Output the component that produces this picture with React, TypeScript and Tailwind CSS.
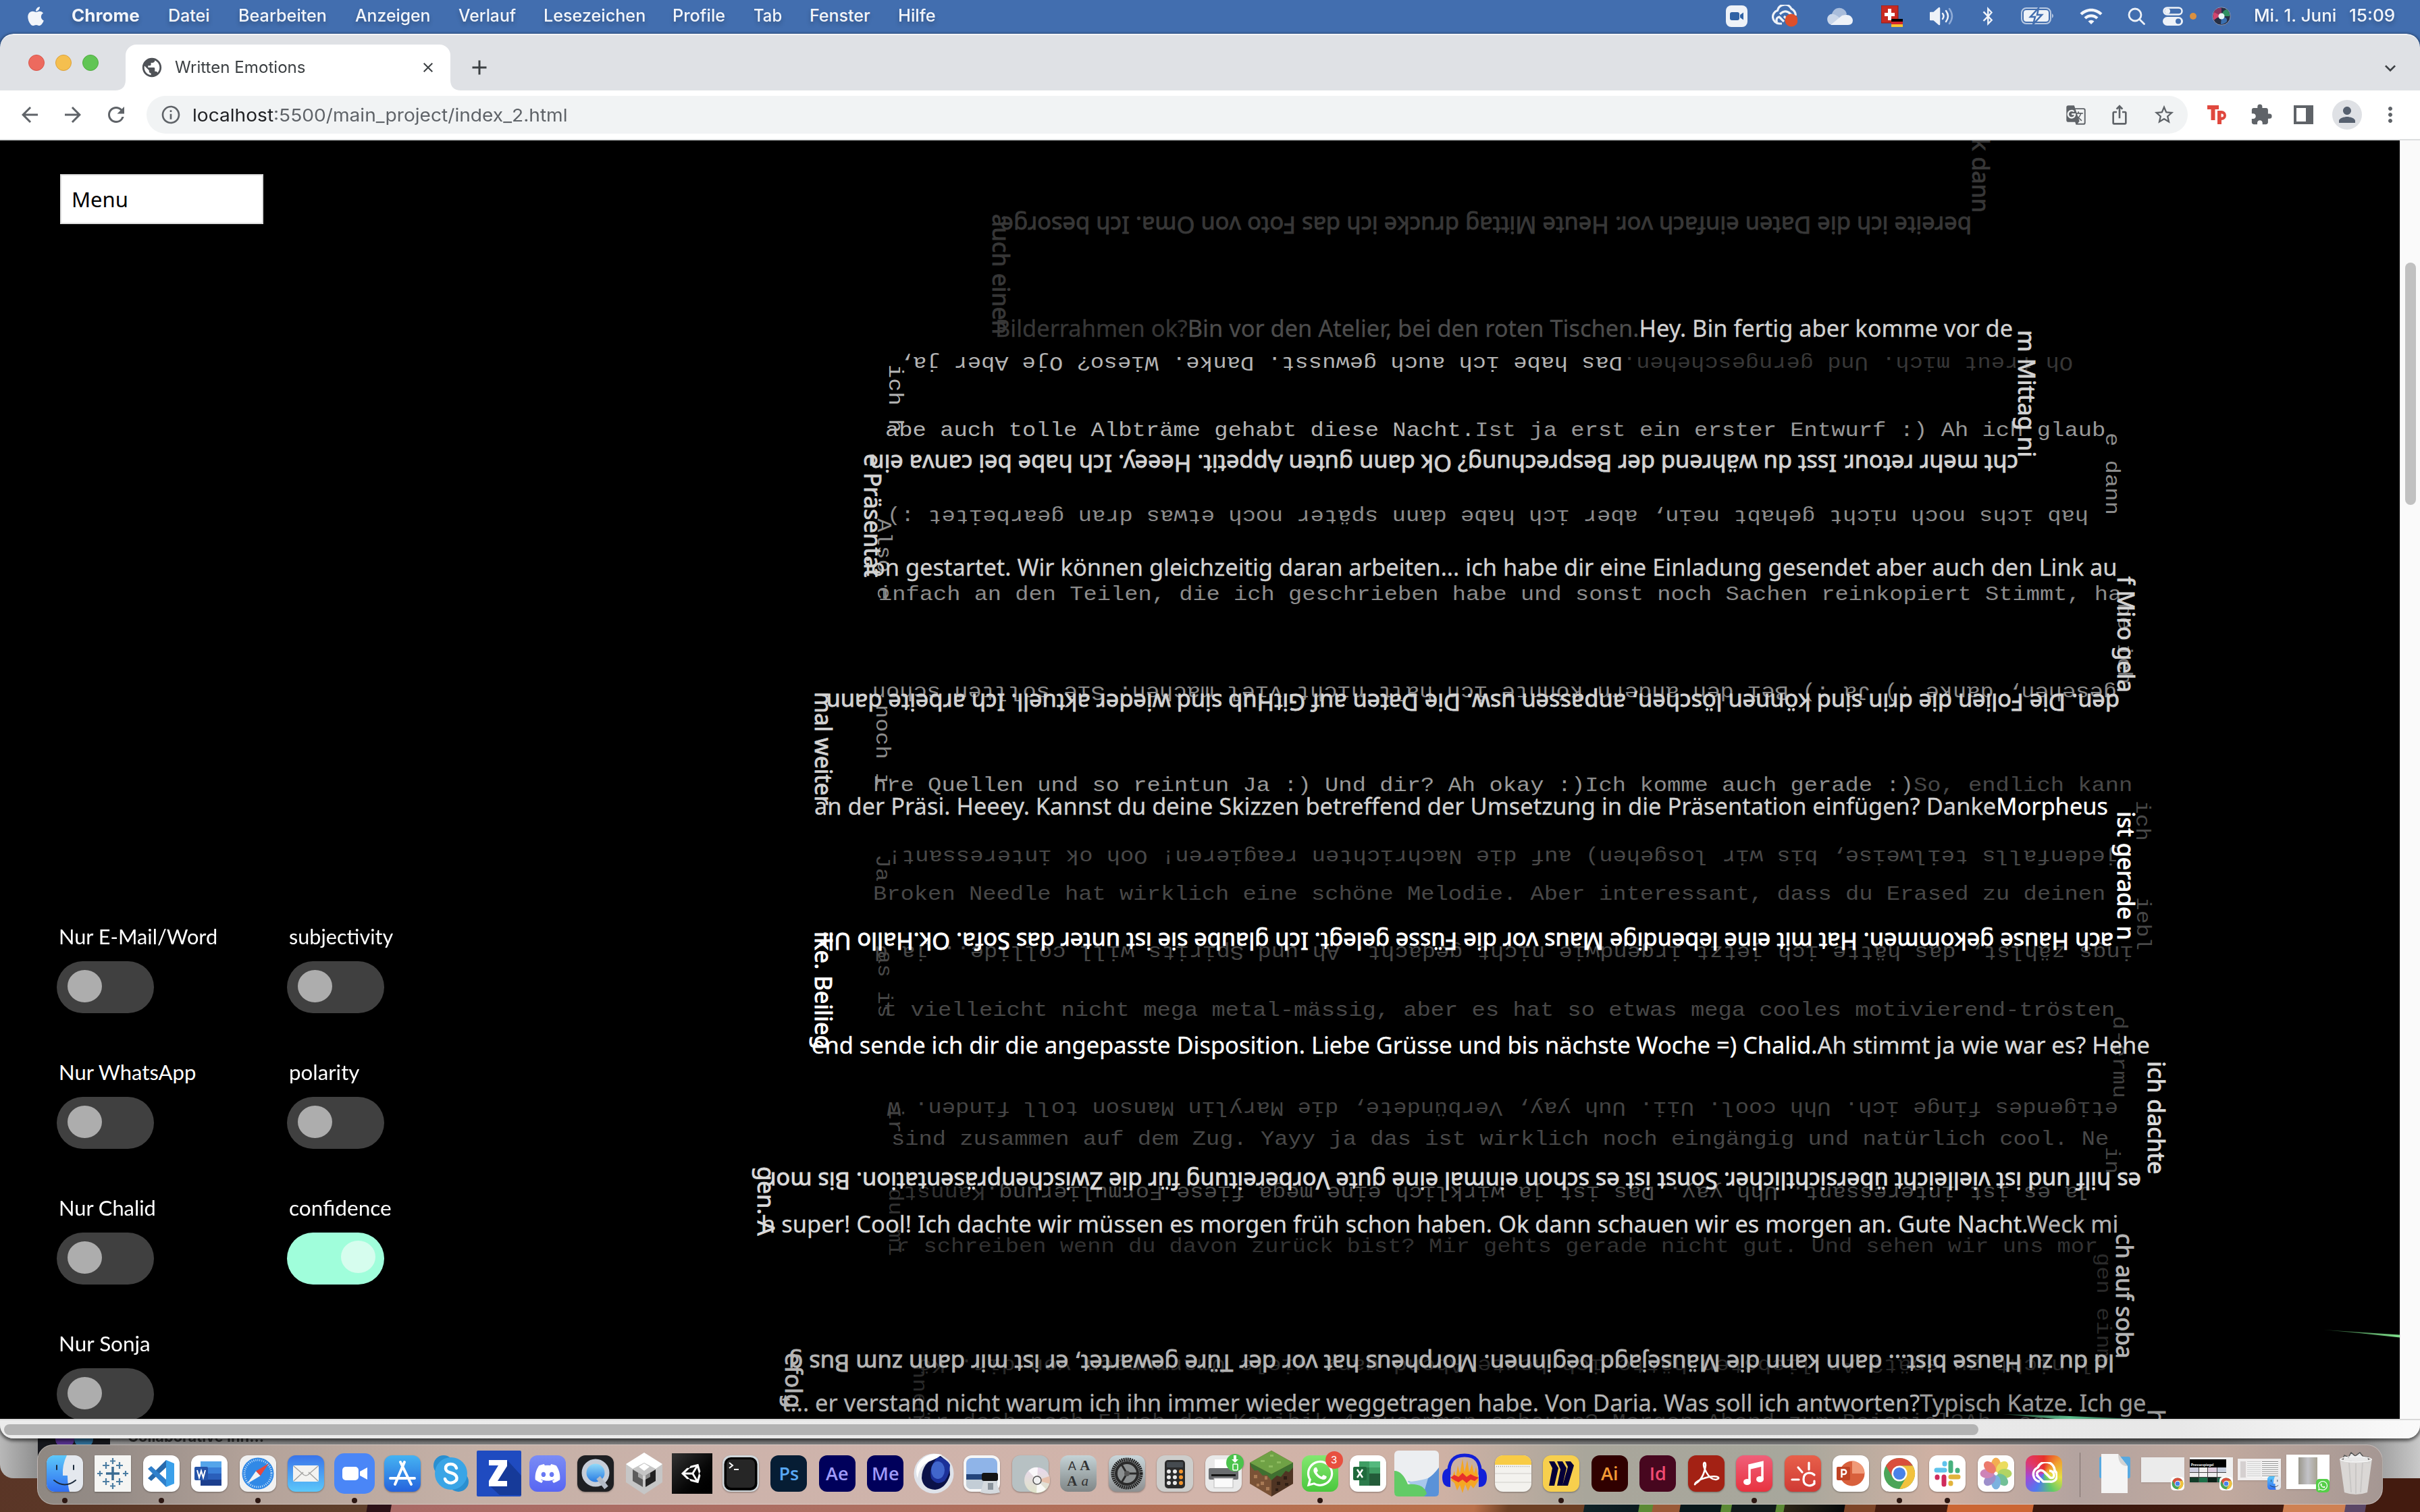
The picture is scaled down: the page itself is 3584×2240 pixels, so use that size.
import React, { useLayoutEffect, useRef, useState } from "react";
import { FaApple, FaBluetoothB, FaDiscord, FaUnity, FaWhatsapp } from "react-icons/fa";
import {
  MdAdd,
  MdArrowBack,
  MdArrowForward,
  MdClose,
  MdExpandMore,
  MdExtension,
  MdGTranslate,
  MdInfoOutline,
  MdIosShare,
  MdMoreVert,
  MdPerson,
  MdPublic,
  MdRefresh,
  MdSearch,
  MdStarBorder,
  MdVolumeUp,
  MdWifi,
} from "react-icons/md";

/* ---------- text helpers ---------- */

function useFit(w: number) {
  const ref = useRef<HTMLSpanElement>(null);
  const [s, setS] = useState(1);
  useLayoutEffect(() => {
    if (ref.current) setS(w / ref.current.offsetWidth);
  }, [w]);
  return { ref, s };
}

/* Label that always takes exactly w pixels. */
function Fit({ w, className = "", children }: { w: number; className?: string; children: React.ReactNode }) {
  const { ref, s } = useFit(w);
  return (
    <span className={"block shrink-0 whitespace-pre " + className} style={{ width: w }}>
      <span ref={ref} className="inline-block origin-left" style={{ transform: `scaleX(${s})` }}>
        {children}
      </span>
    </span>
  );
}

type Run = [string, string];
type Strand = { f: "s" | "m"; r: 0 | 90 | 180; x: number; y: number; to: number; t: Run[] };

const S = (r: 0 | 90 | 180, x: number, y: number, to: number, ...t: Run[]): Strand => ({ f: "s", r, x, y, to, t });
const M = (r: 0 | 90 | 180, x: number, y: number, to: number, ...t: Run[]): Strand => ({ f: "m", r, x, y, to, t });

const strands: Strand[] = [
  M(180, 3070, 529, 1332, ["Oh freut mich. Und gerngeschehen.", "#373737"], ["Das habe ich auch gewusst. Danke. Wieso? Oje Aber ja,", "#b4b4b4"]),
  M(90, 1317, 540, 641, ["ich h", "#b4b4b4"]),
  M(0, 1311, 646, 3118, ["abe auch tolle Albträme gehabt diese Nacht.", "#b4b4b4"], ["Ist ja erst ein erster Entwurf :) Ah ich glaub", "#999999"]),
  M(90, 3119, 641, 763, ["e dann", "#8c8c8c"]),
  M(180, 3093, 756, 1314, ["hab ichs noch nicht gehabt nein, aber ich habe dann später noch etwas dran gearbeitet :)", "#8c8c8c"]),
  M(90, 1300, 768, 889, ["Also e", "#8c8c8c"]),
  M(0, 1301, 889, 3142, ["infach an den Teilen, die ich geschrieben habe und sonst noch Sachen reinkopiert Stimmt, ha", "#8c8c8c"]),
  M(90, 3137, 893, 1014, ["be ich", "#777777"]),
  M(180, 3135, 1017, 1292, ["gesehen, danke :) Ja :) Bei den andern könnte ich halt nicht viel machen. Sie sollten schon", "#8c8c8c"]),
  M(90, 1298, 1044, 1165, ["noch i", "#8c8c8c"]),
  M(0, 1293, 1172, 3158, ["hre Quellen und so reintun Ja :) Und dir? Ah okay :)", "#999999"], ["Ich komme auch gerade :)", "#8c8c8c"], ["So, endlich kann", "#484848"]),
  M(90, 3164, 1186, 1246, ["ich", "#484848"]),
  M(180, 3138, 1260, 1315, ["jedenfalls teilweise, bis wir losgehen) auf die Nachrichten reagieren! Ooh ok interessant!", "#484848"]),
  M(90, 1298, 1266, 1306, ["Ja", "#484848"]),
  M(0, 1293, 1333, 3118, ["Broken Needle hat wirklich eine schöne Melodie. Aber interessant, dass du Erased zu deinen", "#484848"]),
  M(90, 3165, 1329, 1408, ["iebl", "#484848"]),
  M(180, 3160, 1402, 1295, ["ings zählst, das hätte ich jetzt irgendwie nicht gedacht. Ah und Spirits will collide.. ja d", "#484848"]),
  M(90, 1301, 1408, 1508, ["as is", "#484848"]),
  M(0, 1308, 1505, 3132, ["t vielleicht nicht mega metal-mässig, aber es hat so etwas mega cooles motivierend-trösten", "#484848"]),
  M(90, 3130, 1505, 1627, ["d-ermu", "#404040"]),
  M(180, 3137, 1633, 1314, ["etigendes finge ich. Uhh cool. Uii. Uuh yay, Verbündete, die Marylin Manson toll finden. W", "#444444"]),
  M(90, 1317, 1638, 1679, ["ir", "#444444"]),
  M(0, 1320, 1696, 3123, ["sind zusammen auf dem Zug. Yayy ja das ist wirklich noch eingängig und natürlich cool. Ne", "#484848"]),
  M(90, 3119, 1699, 1739, ["in", "#444444"]),
  M(180, 3098, 1758, 1338, ["Ja es ist interessant. Uhh yay. Das ist ja wirklich eine mega fiese Formulierung.", "#4c4c4c"], ["Kannst", "#333333"]),
  M(90, 1317, 1760, 1861, ["du mi", "#333333"]),
  M(0, 1327, 1855, 3107, ["r schreiben wenn du davon zurück bist? Mir gehts gerade nicht gut. Und sehen wir uns mor", "#333333"]),
  M(90, 3106, 1856, 2018, ["gen einm", "#2a2a2a"]),
  M(180, 3121, 2014, 1359, ["al nicht zu spät? An liebsten hätte ich heute Abend ganz viele Umarmungen von dir. Kö", "#2a2a2a"]),
  M(90, 1353, 2022, 2104, ["nnen", "#2a2a2a"]),
  M(0, 1345, 2115, 3029, ["wir doch noch Fluch der Karibik 4 zusammen schauen? Morgen Abend zum Beispiel?Ah, so", "#333333"]),
  S(90, 2921, 205, 315, ["k dann", "#373737"]),
  S(180, 2920, 321, 1482, ["bereite ich die Daten einfach vor. Heute Mittag drucke ich das Foto von Oma. Ich besorge", "#373737"]),
  S(90, 1470, 317, 495, ["auch einen", "#373737"]),
  S(0, 1474, 499, 2981, ["Bilderrahmen ok?", "#373737"], ["Bin vor den Atelier, bei den roten Tischen.", "#4c4c4c"], ["Hey. Bin fertig aber komme vor de", "#d2d2d2"]),
  S(90, 2989, 489, 677, ["m Mittag ni", "#d2d2d2"]),
  S(180, 2989, 674, 1288, ["cht mehr retour. Isst du während der Besprechung? Ok dann guten Appetit. Heeey. Ich habe bei canva ein", "#d2d2d2"]),
  S(90, 1280, 672, 855, ["e Präsentat", "#d2d2d2"]),
  S(0, 1281, 853, 3136, ["ion gestartet. Wir können gleichzeitig daran arbeiten... ich habe dir eine Einladung gesendet aber auch den Link au", "#d2d2d2"]),
  S(90, 3136, 854, 1026, ["f Miro gela", "#d2d2d2"]),
  S(180, 3139, 1028, 1223, ["den. Die Folien die drin sind können löschen, anpassen usw. Die Daten auf GitHub sind wieder aktuell. Ich arbeite dann", "#d2d2d2"]),
  S(90, 1207, 1025, 1193, ["mal weiter", "#d2d2d2"]),
  S(0, 1206, 1207, 3122, ["an der Präsi. Heeey. Kannst du deine Skizzen betreffend der Umsetzung in die Präsentation einfügen? Danke", "#d2d2d2"], ["Morpheus", "#ffffff"]),
  S(90, 3136, 1202, 1393, ["ist gerade n", "#ffffff"]),
  S(180, 3130, 1382, 1212, ["ach Hause gekommen. Hat mit eine lebendige Maus vor die Füsse gelegt. Ich glaube sie ist unter das Sofa. Ok.Hallo Ulr", "#ffffff"]),
  S(90, 1207, 1380, 1555, ["ike. Beilieg", "#ffffff"]),
  S(0, 1202, 1561, 3184, ["end sende ich dir die angepasste Disposition. Liebe Grüsse und bis nächste Woche =) Chalid.", "#ffffff"], ["Ah stimmt ja wie war es? Hehe", "#dadada"]),
  S(90, 3181, 1572, 1740, ["ich dachte", "#dadada"]),
  S(180, 3171, 1737, 1135, ["es hilf und ist vielleicht übersichtlicher. Sonst ist es schon einmal eine gute Vorbereitung für die Zwischenpräsentation. Bis mor", "#dadada"]),
  S(90, 1122, 1728, 1831, ["gen. A", "#dadada"]),
  S(0, 1127, 1826, 3137, ["h super! Cool! Ich dachte wir müssen es morgen früh schon haben. Ok dann schauen wir es morgen an. Gute Nacht.", "#dadada"], ["Weck mi", "#b4b4b4"]),
  S(90, 3134, 1827, 2013, ["ch auf soba", "#b4b4b4"]),
  S(180, 3131, 2007, 1168, ["ld du zu Hause bist... dann kann die Mäusejagd beginnen. Morpheus hat vor der Türe gewartet, er ist mir dann zum Bus g", "#b4b4b4"]),
  S(90, 1163, 2004, 2086, ["efolg", "#b4b4b4"]),
  S(0, 1158, 2091, 3179, ["t... er verstand nicht warum ich ihn immer wieder weggetragen habe. Von Daria. Was soll ich antworten?", "#b4b4b4"], ["Typisch Katze. Ich ge", "#999999"]),
  S(90, 3181, 2088, 2109, ["h", "#999999"]),
];

/* The page canvas starts 208px below the top of the screen. */
function StrandText({ s }: { s: Strand }) {
  const len = s.r === 0 ? s.to - s.x : s.r === 180 ? s.x - s.to : s.to - s.y;
  const { ref, s: k } = useFit(len);
  const lift = s.f === "s" ? -0.388 : -0.2665;
  return (
    <span
      ref={ref}
      className={
        s.f === "m"
          ? "absolute origin-top-left whitespace-pre font-['Liberation_Mono',monospace] text-[30px] leading-[0]"
          : s.r === 0
            ? "absolute origin-top-left whitespace-pre font-['Noto_Sans',sans-serif] text-[34px] leading-[0] [-webkit-text-stroke-width:0.3px]"
            : "absolute origin-top-left whitespace-pre font-['Noto_Sans',sans-serif] text-[34px] leading-[0] [-webkit-text-stroke-width:0.9px]"
      }
      style={{ left: s.x, top: s.y - 208, transform: `rotate(${s.r}deg) translateY(${lift}em) scaleX(${k})` }}
    >
      {s.t.map(([txt, c], i) => (
        <span key={i} style={{ color: c }}>
          {txt}
        </span>
      ))}
    </span>
  );
}

/* ---------- menu bar ---------- */

const menus: [string, number, number][] = [
  ["Datei", 62, 42],
  ["Bearbeiten", 131, 42],
  ["Anzeigen", 112, 42],
  ["Verlauf", 85, 41],
  ["Lesezeichen", 151, 41],
  ["Profile", 78, 40],
  ["Tab", 42, 42],
  ["Fenster", 90, 41],
  ["Hilfe", 56, 41],
];

function Slot({ w, children }: { w: number; children: React.ReactNode }) {
  return (
    <div className="flex shrink-0 items-center justify-center" style={{ width: w }}>
      {children}
    </div>
  );
}

function MenuBar() {
  return (
    <div className="flex h-[50px] shrink-0 items-center bg-[#426eaf] pb-0.5 font-['Inter',sans-serif] text-[25px] font-medium text-[#f2f5fa] [text-shadow:0_4px_6px_rgba(0,0,0,.25)]">
      <FaApple className="ml-[37px] size-8 shrink-0" />
      <Fit w={101} className="ml-[37px] font-bold">Chrome</Fit>
      {menus.map(([t, w, gap]) => (
        <div key={t} className="flex" style={{ marginLeft: gap }}>
          <Fit w={w}>{t}</Fit>
        </div>
      ))}
      <div className="ml-auto flex items-center pr-[37px]">
        <Slot w={70}>
          <svg viewBox="0 0 32 32" className="size-8">
            <rect width="32" height="32" rx="8" fill="#eef2f8" />
            <rect x="6" y="10" width="14" height="12" rx="3" fill="#2f62a5" />
            <path d="M21 14l5-3.500v11l-5-3.500z" fill="#2f62a5" />
          </svg>
        </Slot>
        <Slot w={70}>
          <svg viewBox="0 0 40 34" className="h-[34px] w-10" fill="none" stroke="#eef2f8" strokeWidth="3.200">
            <path d="M17 28H13A10 10 0 0 1 10.500 8.500A11 11 0 0 1 31 6q6 3 6.500 10" />
            <path d="M20 25L13 18a5 5 0 0 0-3 8M14 14q8-8 15-1l7 6M20 17l6 6" />
            <circle cx="31" cy="23" r="9.500" fill="#dc4f2b" stroke="none" />
          </svg>
        </Slot>
        <Slot w={94}>
          <svg viewBox="0 0 40 28" className="h-7 w-10">
            <path d="M9 15A11 11 0 0 1 31 11L20 20z" fill="#a9bddb" />
            <path d="M9 27A8.500 8.500 0 0 1 7 11q6-1 13 5L12 27z" fill="#c9d6e9" />
            <path d="M7 27L24 13q14-4 16 7 0 7-7 7z" fill="#eef2f8" />
          </svg>
        </Slot>
        <Slot w={62}>
          <svg viewBox="0 0 32 32" className="size-8">
            <rect width="25" height="26" fill="#c92a20" stroke="#8f1a14" />
            <path d="M10 5h5v6h5v5h-5v6h-5v-6H5v-5h5z" fill="#fff" />
            <path d="M15 20h17v4H15z" fill="#000" />
            <path d="M15 24h17v4H15z" fill="#d2262a" />
            <path d="M15 28h17v4H15z" fill="#f4c531" />
          </svg>
        </Slot>
        <Slot w={86}>
          <svg viewBox="0 0 36 28" className="h-7 w-9" fill="none" strokeWidth="2.500" strokeLinecap="round">
            <path d="M1 9h5l8-7v24l-8-7H1z" fill="#eef2f8" stroke="#eef2f8" strokeLinejoin="round" />
            <path d="M19 10q3 4 0 8M24 6q6 8 0 16" stroke="#eef2f8" />
            <path d="M29 3q8 11 0 22" stroke="#8fabd6" />
          </svg>
        </Slot>
        <Slot w={50}><FaBluetoothB className="size-7" /></Slot>
        <Slot w={98}>
          <svg viewBox="0 0 50 26" className="h-[26px] w-[50px]">
            <rect x="1" y="1" width="43" height="23" rx="7" fill="none" stroke="#b8c9e2" strokeWidth="2" />
            <rect x="4" y="4" width="37" height="17" rx="4" fill="#eef2f8" />
            <path d="M46 9q4 3.500 0 7z" fill="#b8c9e2" />
            <path d="M26 1L14 14h7l-3 11L31 11h-7z" fill="#eef2f8" stroke="#426eaf" strokeWidth="2.500" />
          </svg>
        </Slot>
        <Slot w={60}><MdWifi className="size-9" /></Slot>
        <Slot w={74}>
          <svg viewBox="0 0 26 26" className="size-[26px]" fill="none" stroke="#eef2f8" strokeWidth="2.800" strokeLinecap="round">
            <circle cx="11" cy="11" r="9" />
            <path d="M17.500 17.500l7 7" />
          </svg>
        </Slot>
        <Slot w={34}>
          <svg viewBox="0 0 30 28" className="h-7 w-[30px]">
            <rect x="1.500" y="1.500" width="27" height="10" rx="5" fill="none" stroke="#eef2f8" strokeWidth="2.500" />
            <circle cx="7" cy="6.500" r="4" fill="#eef2f8" />
            <rect y="15" width="30" height="13" rx="6.500" fill="#eef2f8" />
            <circle cx="23" cy="21.500" r="4" fill="#426eaf" />
          </svg>
        </Slot>
        <Slot w={26}><div className="size-2.5 rounded-full bg-[#d99040]" /></Slot>
        <Slot w={58}>
          <svg viewBox="0 0 28 28" className="size-7">
            <circle cx="14" cy="14" r="13.300" fill="#262f45" stroke="#8f9bb8" />
            <path d="M14 14Q4 14 3 7q5-6 11-5z" fill="#8d3560" />
            <path d="M14 14Q16 4 22 4q5 5 4 10z" fill="#2f8f62" />
            <path d="M14 14q10 2 8 8-4 4-9 4z" fill="#3a6fb0" />
            <path d="M14 14Q6 16 3 20q-3-6 0-12z" fill="#d2456e" />
            <circle cx="14" cy="14" r="4.500" fill="#e6f6f6" />
          </svg>
        </Slot>
        <Fit w={122} className="ml-[19px]">Mi. 1. Juni</Fit>
        <Fit w={68} className="ml-[19px]">15:09</Fit>
      </div>
    </div>
  );
}

/* ---------- browser ---------- */

function TabStrip() {
  return (
    <div className="flex h-[84px] shrink-0 items-end rounded-t-[20px] border-t-2 border-[#f3f4f6] bg-[#dfe1e5]">
      <div className="mb-[29px] ml-[42px] flex gap-4">
        <div className="size-6 rounded-full border border-[#d8564b] bg-[#ed6a5e]" />
        <div className="size-6 rounded-full border border-[#dca13a] bg-[#f5bf4f]" />
        <div className="size-6 rounded-full border border-[#50ab40] bg-[#61c554]" />
      </div>
      <svg viewBox="0 0 16 16" className="ml-6 size-4 shrink-0"><path d="M16 0v16H0Q16 16 16 0z" fill="#fff" /></svg>
      <div className="flex h-[68px] w-[481px] items-center rounded-t-[16px] bg-white pl-[22px]">
        <MdPublic className="size-[34px] text-[#4f5257]" />
        <Fit w={194} className="ml-[17px] font-['Inter',sans-serif] text-[24px] text-[#3c4043]">Written Emotions</Fit>
        <MdClose className="ml-[169px] size-6 text-[#3c4043]" />
      </div>
      <svg viewBox="0 0 16 16" className="size-4 shrink-0"><path d="M0 0v16h16Q0 16 0 0z" fill="#fff" /></svg>
      <MdAdd className="mb-[16px] ml-[9px] size-9 text-[#3c4043]" />
      <MdExpandMore className="mb-[17px] ml-auto mr-[28px] size-8 text-[#3c4043]" />
    </div>
  );
}

function Toolbar() {
  return (
    <div className="flex h-[74px] shrink-0 items-center border-b-2 border-[#dcdedf] bg-white font-['Inter',sans-serif] text-[26px] text-[#5f6368]">
      <MdArrowBack className="ml-[26px] size-9" />
      <MdArrowForward className="ml-7 size-9" />
      <MdRefresh className="ml-[28px] size-9" />
      <div className="ml-[27px] flex h-14 w-[3023px] items-center rounded-full bg-[#f1f3f4] pl-5">
        <MdInfoOutline className="size-8" />
        <Fit w={120} className="ml-4 text-[#202124]">localhost</Fit>
        <Fit w={436}>:5500/main_project/index_2.html</Fit>
        <div className="ml-auto flex items-center gap-[33px] pr-[18px]">
          <MdGTranslate className="size-[31px]" />
          <MdIosShare className="size-[32px]" />
          <MdStarBorder className="size-[34px]" />
        </div>
      </div>
      <svg viewBox="0 0 30 30" className="ml-[29px] size-[30px] shrink-0" fill="#e0483e">
        <path d="M0 1h17v6h-5.500v16h-6V7H0z" />
        <path fillRule="evenodd" d="M15 9h6a7 7 0 0 1 0 14v6h-6zM20.500 13.500v5h1a2.500 2.500 0 0 0 0-5z" />
      </svg>
      <MdExtension className="ml-[33px] size-[34px]" />
      <div className="ml-[31px] h-7 w-[29px] border-[4px] border-r-[11px] border-[#5f6368]" />
      <div className="ml-[28px] flex size-11 items-center justify-center rounded-full bg-[#dfe1e5] text-[#56606f]">
        <MdPerson className="size-9" />
      </div>
      <MdMoreVert className="ml-6 size-9" />
    </div>
  );
}

function Toggle({ label, w, on = false }: { label: string; w: number; on?: boolean }) {
  return (
    <div className="flex h-[201px] w-[341px] flex-col">
      <Fit w={w} className="ml-[3px] h-[54px] font-['Lato',sans-serif] text-[31px] leading-[34px] text-white">{label}</Fit>
      <div
        className={
          on
            ? "flex h-[77px] w-36 items-start justify-end rounded-full bg-[#a0fedb] pr-[13px] pt-3"
            : "flex h-[77px] w-36 items-start rounded-full bg-[#404040] pl-4 pt-[13px]"
        }
      >
        <div className={on ? "h-12 w-[51px] rounded-[50%] bg-[#d6fdee]" : "h-12 w-[51px] rounded-[50%] bg-[#adadad]"} />
      </div>
    </div>
  );
}

function Page() {
  return (
    <div className="relative h-[1894px] w-[3554px] shrink-0 overflow-hidden bg-black">
      <div className="flex flex-col pl-[84px] pt-[50px]">
        <div className="ml-[5px] flex h-[74px] w-[301px] items-center border-2 border-[#dcdcdc] bg-white pl-[15px] font-['Noto_Sans',sans-serif] text-[31px] text-black">
          Menu
        </div>
        <div className="mt-[1038px] flex">
          <div className="flex flex-col">
            <Toggle label="Nur E-Mail/Word" w={235} />
            <Toggle label="Nur WhatsApp" w={203} />
            <Toggle label="Nur Chalid" w={144} />
            <Toggle label="Nur Sonja" w={136} />
          </div>
          <div className="flex flex-col">
            <Toggle label="subjectivity" w={154} />
            <Toggle label="polarity" w={105} />
            <Toggle label="confidence" w={152} on />
          </div>
        </div>
      </div>
      {strands.map((s, i) => (
        <StrandText key={i} s={s} />
      ))}
      <svg viewBox="0 0 700 160" className="absolute bottom-0 right-0 h-40 w-[700px]">
        <defs>
          <linearGradient id="ga"><stop offset="0" stopColor="#1c3a22" /><stop offset="1" stopColor="#7fe08c" /></linearGradient>
          <linearGradient id="gb"><stop offset="0" stopColor="#1c3a2c" /><stop offset=".5" stopColor="#5cbf8d" /><stop offset="1" stopColor="#1f5038" /></linearGradient>
        </defs>
        <path d="M587 28L700 35.500v4L640 33z" fill="url(#ga)" />
        <path d="M112 153L200 155.500L308 160H190z" fill="url(#gb)" />
      </svg>
    </div>
  );
}

/* ---------- dock ---------- */

const Tile = ({ bg, children, rx = 12 }: { bg: string; children?: React.ReactNode; rx?: number }) => (
  <svg viewBox="0 0 54 54" className="size-[54px] overflow-visible drop-shadow-[0_1px_1px_rgba(0,0,0,.35)]">
    <rect width="54" height="54" rx={rx} fill={bg} />
    {children}
  </svg>
);

const Word = ({ bg, fg, t }: { bg: string; fg: string; t: string }) => (
  <div className={"flex size-[54px] items-center justify-center rounded-[12px] font-['Open_Sans',sans-serif] text-[27px] font-semibold " + bg + " " + fg}>
    {t}
  </div>
);

const chromeLogo = (cx: number, cy: number, r: number) => (
  <g transform={`translate(${cx} ${cy}) scale(${r / 24})`}>
    <circle r="24" fill="#4ba558" />
    <path d="M-20.800-12A24 24 0 0 1 20.800-12H0L-10.400 6z" fill="#d94f3d" />
    <path d="M20.800-12A24 24 0 0 1 0 24L10.400 6 0-12z" fill="#f2c23e" />
    <circle r="12" fill="#fff" />
    <circle r="9.500" fill="#4a82e8" />
  </g>
);

const Finder = () => (
  <>
    <path d="M12 0h18q-7 14-6 30h7q0 14 3 24H12A12 12 0 0 1 0 42V12A12 12 0 0 1 12 0z" fill="url(#dfinder)" />
    <path d="M15 15v6M40 15v6M11 37q16 13 32 0" stroke="#1b2a3c" strokeWidth="2" fill="none" strokeLinecap="round" />
  </>
);

const dock: React.ReactNode[] = [
  <Tile bg="#e4e8ee"><Finder /></Tile>,
  <Tile bg="#f5f5f3" rx={1}>
    <path d="M27 17v20M17 27h20" stroke="#3a6b92" strokeWidth="3.500" />
    <path d="M17 10v10M12 15h10M37 10v10M32 15h10M17 34v10M12 39h10M37 34v10M32 39h10M27 4v9M23 8.500h8M27 41v9M23 45.500h8M8 23v8M4 27h8M46 23v8M42 27h8" stroke="#4d7ea3" strokeWidth="2.200" />
  </Tile>,
  <Tile bg="#fff">
    <path d="M34 7l12 5v30l-12 5z" fill="#3aa0ea" />
    <path d="M34 7v11L12 38l-5-4z" fill="#2669ac" />
    <path d="M34 47V36L12 16l-5 4z" fill="#2f80cc" />
  </Tile>,
  <Tile bg="#fff">
    <path d="M14 9h31v9H14z" fill="#55a5ea" /><path d="M14 18h31v9H14z" fill="#3a7fd8" />
    <path d="M14 27h31v9H14z" fill="#2a5fba" /><path d="M14 36h31v9H14z" fill="#1c3f8e" />
    <rect x="5" y="17" width="20" height="20" rx="2" fill="#2453a8" />
    <path d="M9 22l3 11 3-10 3 10 3-11" stroke="#fff" strokeWidth="2" fill="none" />
  </Tile>,
  <Tile bg="#f1f1f1">
    <circle cx="27" cy="27" r="23.500" fill="#3189e6" />
    <circle cx="27" cy="27" r="20" fill="none" stroke="#cfe6fb" strokeWidth="3" strokeDasharray="1 2" />
    <path d="M43 12L30.500 30.500 24 23.500z" fill="#e8473c" /><path d="M11 42L30.500 30.500 24 23.500z" fill="#f2f2f2" />
  </Tile>,
  <Tile bg="url(#dmail)">
    <rect x="8" y="15" width="38" height="24" rx="2" fill="#f3f3f1" />
    <path d="M9 38l14-13M45 38L31 25M9 16l15 13q3 2 6 0L45 16" stroke="#a5a5a3" strokeWidth="1.500" fill="none" />
  </Tile>,
  <svg viewBox="0 0 60 60" className="size-[60px]"><rect width="60" height="60" rx="15" fill="#4a86f7" /><rect x="12" y="20" width="24" height="20" rx="5" fill="#fff" /><path d="M38 27l11-6v18l-11-6z" fill="#fff" /></svg>,
  <Tile bg="url(#dapp)"><path d="M30 10L16 43M24 10l16 33M9 34h24M38 34h7" stroke="#fff" strokeWidth="4" strokeLinecap="round" /></Tile>,
  <svg viewBox="0 0 54 54" className="size-[54px] overflow-visible">
    <circle cx="16" cy="15" r="15" fill="#2a8fd0" /><circle cx="38" cy="39" r="15" fill="#2a8fd0" /><circle cx="27" cy="27" r="24" fill="#3aa5e6" />
    <path d="M35 19q-2-6-8.500-6-7.500 0-7.500 6.500 0 4.500 8 6.500t8.500 7.500-8.500 7.500q-7 0-9-6" fill="none" stroke="#fff" strokeWidth="4.500" strokeLinecap="round" />
  </svg>,
  <svg viewBox="0 0 66 68" className="h-[68px] w-[66px]">
    <rect width="66" height="68" rx="2" fill="#1f4bc0" /><path d="M46 15l20 22v29H34L19 52z" fill="#163a99" />
    <path d="M18 14h27v9L31 45h14v8H18v-8l14-23H18z" fill="#fff" />
  </svg>,
  <div className="flex size-[54px] items-center justify-center rounded-[12px] bg-gradient-to-b from-[#7b8cf5] to-[#5865f2] text-white"><FaDiscord className="size-10" /></div>,
  <Tile bg="#1e1f22"><circle cx="27" cy="26" r="17" fill="url(#dqt)" stroke="#c6cdd8" strokeWidth="7" /><path d="M31 33l12 15" stroke="#b3bac5" strokeWidth="7" /></Tile>,
  <svg viewBox="0 0 54 62" className="h-[62px] w-[54px]">
    <path d="M27 0l27 17v27L27 62 0 44V17z" fill="#c6c6c6" /><path d="M27 0l27 17-10 7-17-9-17 9L0 17z" fill="#fff" />
    <path d="M27 16l8 5-8 6-8-6z" fill="#fff" />
    <path d="M10 25l15 9v17l-15-9z" fill="#5c5c5c" /><path d="M44 25l-15 9v17l15-9z" fill="#222" />
    <path d="M27 35l9-5v6l-9 5-9-5v-6z" fill="#e5e5e5" opacity=".55" />
  </svg>,
  <div className="flex size-[60px] items-center justify-center bg-gradient-to-br from-[#333] to-black text-white"><FaUnity className="size-[34px]" /></div>,
  <Tile bg="#cfd6da"><rect x="2.500" y="3" width="49" height="49" rx="10" fill="#000" /><rect x="6" y="6" width="42" height="42" rx="7" fill="#262626" /><path d="M10 11l5 4-5 4M17 21h7" stroke="#fff" strokeWidth="2" fill="none" /></Tile>,
  <Word bg="bg-[#061d34]" fg="text-[#58a8f5]" t="Ps" />,
  <Word bg="bg-[#00005b]" fg="text-[#9f9af8]" t="Ae" />,
  <Word bg="bg-[#00005b]" fg="text-[#9f9af8]" t="Me" />,
  <svg viewBox="0 0 60 62" className="h-[62px] w-[60px]">
    <circle cx="30" cy="31" r="29.500" fill="#dfe3ea" />
    <path d="M38 4Q12 14 12 38q2 16 20 17 16-2 22-22 0-20-16-29z" fill="#0b1248" />
    <path d="M36 6q-14 16-10 32 8 12 20 4 8-10 8-24Q48 8 36 6z" fill="#1c3199" />
    <ellipse cx="36" cy="26" rx="10" ry="13" fill="#4b74d8" opacity=".8" />
    <path d="M42 3Q18-2 6 18q-4 10 0 20Q8 18 26 12 36 8 42 3z" fill="#fff" />
  </svg>,
  <Tile bg="#f6f6f6">
    <rect x="4" y="4" width="46" height="46" rx="8" fill="#8fb4e8" /><path d="M4 28h46v8H4z" fill="#24457c" /><path d="M4 36h46v7q0 7-8 7H12q-8 0-8-7z" fill="#c3cdd6" />
    <rect x="27" y="26" width="24" height="12" rx="3" fill="#141414" /><path d="M30 38h18l6 17q-15 4-29 0z" fill="#d5dade" /><path d="M36 41h8v10h-8z" fill="#8b949c" />
  </Tile>,
  <Tile bg="#b7c1c3">
    <circle cx="37" cy="37" r="19" fill="url(#dcd)" />
    <path d="M37 37L24 23q6-6 14-5zM37 37l13 13q-6 6-14 5z" fill="#fff" opacity=".8" />
    <path d="M37 37l18-6q2 6 0 11z" fill="#e6b9a0" opacity=".8" />
    <circle cx="37" cy="37" r="6" fill="#f0f0f0" stroke="#555" strokeWidth="1.500" />
  </Tile>,
  <div className="grid size-[54px] grid-cols-2 place-items-center rounded-[12px] bg-gradient-to-b from-[#c5d3d6] to-[#7f8687] px-2 py-1 font-['Liberation_Serif',serif] text-[21px] leading-none text-[#333]">
    <span className="font-['Liberation_Sans',sans-serif] text-[18px]">A</span><span className="font-bold">A</span><span className="font-bold">A</span><span className="italic">a</span>
  </div>,
  <Tile bg="url(#dsys)"><circle cx="27" cy="27" r="21" fill="#8c9091" stroke="#1e1e1e" strokeWidth="5" strokeDasharray="2 1" /><circle cx="27" cy="27" r="16" fill="none" stroke="#2a2a2a" strokeWidth="4" /><path d="M27 27h17M27 27l-9-15M27 27l-9 15" stroke="#2a2a2a" strokeWidth="3" /><circle cx="27" cy="27" r="4" fill="#555" /></Tile>,
  <Tile bg="#cdcdcb">
    <rect x="12" y="7" width="30" height="42" rx="5" fill="#2b2b2b" /><rect x="15" y="10" width="24" height="8" rx="1" fill="#464b50" />
    {[24, 32.500, 41].map((y) => (<g key={y}><circle cx="18" cy={y} r="3" fill="#e8e8e8" /><circle cx="27" cy={y} r="3" fill="#e8e8e8" /><circle cx="36" cy={y} r="3" fill="#f2962f" /></g>))}
  </Tile>,
  <Tile bg="#e9e9e9">
    <rect x="14" y="6" width="26" height="16" fill="#fff" /><rect x="5" y="19" width="44" height="17" rx="2" fill="#6b6d70" /><path d="M9 28h36v3H9z" fill="#151515" /><rect x="13" y="34" width="28" height="14" fill="#fafafa" stroke="#bbb" />
    <circle cx="44" cy="11" r="13" fill="#4cc34c" /><path d="M42 0h4v6h3l-5 5-5-5h3z" fill="#fff" /><rect x="41" y="13" width="7" height="9" rx="1" fill="none" stroke="#fff" strokeWidth="1.500" />
  </Tile>,
  <svg viewBox="0 0 64 68" className="h-[68px] w-16">
    <path d="M32 0l32 18v31L32 68 0 49V18z" fill="#7a5236" /><path d="M32 34l32-16v31L32 68z" fill="#4f3423" /><path d="M32 0l32 18-32 17L0 18z" fill="#6fa145" />
    <path d="M0 18l32 17 32-17v7l-6 7-5-2-7 9-6-2-8 7-7-8-6 1-7-8-5 1-5-6z" fill="#3f7030" />
    <path d="M6 36h5v5H6zM16 46h5v5h-5zM22 38h4v5h-4zM10 49h4v4h-4zM24 54h5v5h-5z" fill="#a97a55" /><path d="M40 46h5v5h-5zM50 38h5v5h-5zM52 48h5v4h-5zM38 56h4v4h-4z" fill="#2f1e14" />
    <path d="M16 14h6v3h-6zM30 6h5v3h-5zM40 16h6v3h-6zM28 22h6v3h-6z" fill="#8dbb5f" />
  </svg>,
  <div className="relative flex size-[54px] items-center justify-center rounded-[12px] bg-gradient-to-b from-[#83e870] to-[#48c73c] text-white">
    <FaWhatsapp className="size-11" />
    <span className="absolute -right-[7px] -top-[6px] flex size-[26px] items-center justify-center rounded-full bg-[#e8503f] font-['Inter',sans-serif] text-[15px]">3</span>
  </div>,
  <Tile bg="#fff">
    <path d="M14 9h15v36H14z" fill="#2c7b4b" /><path d="M29 9h16v9H29z" fill="#55b97e" /><path d="M14 9h15v9H14z" fill="#3f9d63" /><path d="M29 18h16v9H29z" fill="#3f9d63" /><path d="M29 27h16v18H29z" fill="#235c39" />
    <rect x="5" y="17" width="20" height="20" rx="2" fill="#1f6a3c" /><path d="M11 21l8 12M19 21l-8 12" stroke="#fff" strokeWidth="2.500" />
  </Tile>,
  <svg viewBox="0 0 66 68" className="h-[68px] w-[66px]">
    <rect width="66" height="68" rx="6" fill="#eceef1" /><path d="M66 25v37q0 6-6 6H40L20 45q26 8 46-20z" fill="#5a92d8" /><path d="M20 46q12 0 30-5l-8 27z" fill="#a8c8ec" /><path d="M0 30q12 0 20 20 24-2 28 14l-4 4H6q-6 0-6-6z" fill="#62cb66" />
  </svg>,
  <svg viewBox="0 0 66 60" className="h-[60px] w-[66px]">
    <path d="M13 40l5-14 2 10 3-18 3 12 4-22 3 20 4-18 3 18 4-12 3 14 3-10 4 20-8 12-4-5-4 9-4-10-4 13-4-12-4 8-4-11z" fill="#f5a623" />
    <path d="M12 36l6-4 6 3 6-6 6 6 6-4 6 3 6 2-6 5-6-2-6 5-6-5-6 4-6-3z" fill="#e8302a" />
    <path d="M10 32Q8 3 33 3t23 29" fill="none" stroke="#1220d8" strokeWidth="5" /><path d="M12 22v28Q0 50 0 36T12 22zM54 22v28q12 0 12-14T54 22z" fill="#1220d8" />
  </svg>,
  <Tile bg="#f3f2ee"><path d="M0 14V12A12 12 0 0 1 12 0h30a12 12 0 0 1 12 12v2z" fill="#f8cb45" /><path d="M0 27h54M0 40h54" stroke="#cfcdc8" strokeWidth="1" /><path d="M2 16.500h50" stroke="#9d9b96" strokeWidth="1.500" strokeDasharray="1 2" /></Tile>,
  <Tile bg="#f7cf4d"><path d="M9 9h8l6 10-6 26H9l5-26zM21 9h8l6 10-6 26h-8l5-24zM33 9h8l5 6-9 30h-8l8-28z" fill="#050038" /></Tile>,
  <Word bg="bg-[#300000]" fg="text-[#f59a34]" t="Ai" />,
  <Word bg="bg-[#47071f]" fg="text-[#f14b72]" t="Id" />,
  <Tile bg="#a32114"><path d="M11 42q12-7 15-27 0-5-2-4-3 3 3 14t14 11q5-1 4-3-3-3-14-1-14 3-20 9-2 4 0 1z" fill="none" stroke="#fff" strokeWidth="2.600" strokeLinejoin="round" /></Tile>,
  <Tile bg="url(#dmus)"><path d="M20 39V15l19-4.500V35" fill="none" stroke="#fff" strokeWidth="3.500" /><path d="M20 15l19-4.500v6L20 21z" fill="#fff" /><ellipse cx="16.500" cy="39.500" rx="5.500" ry="4.500" fill="#fff" /><ellipse cx="35.500" cy="35.500" rx="5.500" ry="4.500" fill="#fff" /></Tile>,
  <Tile bg="url(#dred)"><path d="M44 29q-3-3-8-3-8 1-8 9.500t8 9.500q5 0 8-3v-4M36 11v10M20 18l6 7M11 36h10" fill="none" stroke="#fff" strokeWidth="3.200" strokeLinecap="round" /></Tile>,
  <Tile bg="#fff"><circle cx="29" cy="27" r="18.500" fill="#d8603c" /><path d="M29 8.500A18.500 18.500 0 0 1 47.500 27H29z" fill="#f09a78" /><rect x="6" y="17" width="20" height="20" rx="2" fill="#bf4324" /><path d="M13.500 33V21.500h3.500a3.200 3.200 0 0 1 0 6.500h-3.500" fill="none" stroke="#fff" strokeWidth="2.400" /></Tile>,
  <Tile bg="#fff">{chromeLogo(27, 27, 23)}</Tile>,
  <Tile bg="#fff">
    <g strokeWidth="7" strokeLinecap="round"><path d="M11 22h12M23 12v1" stroke="#5fc3ec" /><path d="M32 11v12M42 22v1" stroke="#48b07e" /><path d="M43 32H32M32 42v-1" stroke="#e2b33c" /><path d="M22 43V32M12 32v1" stroke="#cf2c5c" /></g>
  </Tile>,
  <Tile bg="#fdfdfd">
    <g transform="translate(27 27)" opacity=".88">
      {["#f2a33a", "#e9d84a", "#a8cf4e", "#5fb88a", "#6aa8dc", "#8f7fc4", "#c874ae", "#e9685a"].map((c, i) => (
        <ellipse key={c} cx="0" cy="-13" rx="7" ry="10.500" fill={c} transform={`rotate(${i * 45})`} />
      ))}
    </g>
  </Tile>,
  <div className="flex size-[54px] items-center justify-center rounded-[12px] bg-[conic-gradient(from_0deg,#e8302a,#f0a030,#e6e040,#5fc96a,#4f7af0,#a048d8,#e0386a,#e8302a)]">
    <svg viewBox="0 0 40 34" className="h-[34px] w-10" fill="none" stroke="#fff" strokeWidth="3.500">
      <path d="M14 29a11 11 0 0 1-3-21 13 13 0 0 1 25 5 9 9 0 0 1-7 16H19L9 19" />
      <path d="M12 22q-5-6 1-9 4-2 8 2l8 8q6 2 6-4-1-6-7-6" />
    </svg>
  </div>,
];

const running = new Set([0, 2, 4, 6, 26, 31, 35, 38, 39]);

function Defs() {
  const g = (id: string, a: string, b: string) => (
    <linearGradient id={id} x1="0" y1="0" x2="0" y2="1"><stop offset="0" stopColor={a} /><stop offset="1" stopColor={b} /></linearGradient>
  );
  return (
    <svg className="absolute size-0">
      <defs>
        {g("dfinder", "#5cc8fa", "#2f6df0")}
        {g("dmail", "#3a74ea", "#5cc8fa")}
        {g("dapp", "#45b3f2", "#2563dd")}
        {g("dqt", "#9fe6fb", "#1a6fe0")}
        {g("dcd", "#e8d8ec", "#dfe3c8")}
        {g("dsys", "#c9d6da", "#8d8f90")}
        {g("dmus", "#f0607a", "#e8323f")}
        {g("dred", "#e8604a", "#cf3a34")}
      </defs>
    </svg>
  );
}

const badge = "absolute bottom-0 right-0 size-5";

function DockSlot({ dot, children }: { dot?: boolean; children: React.ReactNode }) {
  return (
    <div className="relative flex h-[84px] w-[71.5px] shrink-0 items-center justify-center">
      {children}
      {dot && <div className="absolute -bottom-0.5 size-2 rounded-full bg-[#2c1712]" />}
    </div>
  );
}

function Dock() {
  return (
    <div className="ml-[55px] flex h-[89px] w-[3474px] items-start rounded-[24px] border border-[#ffffff50] bg-[linear-gradient(90deg,#8f8882_0%,#948b86_3%,#b3a299_9%,#c4b0a6_18%,#cdb3ab_30%,#d2b4aa_50%,#ceb1a4_60%,#a9a69b_66%,#a7a79c_75%,#d0b1a3_81%,#b3a39f_87%,#c2aa9f_93%,#a59793_100%)] pl-1">
      {dock.map((n, i) => (
        <DockSlot key={i} dot={running.has(i)}>{n}</DockSlot>
      ))}
      <div className="ml-[17px] mr-[15px] mt-[11px] h-[66px] w-px bg-[#7d706c]" />
      <DockSlot>
        <svg viewBox="0 0 46 60" className="h-[60px] w-[46px]"><rect y="5" width="46" height="32" rx="3" fill="#58a9e0" /><path d="M3 1h25l14 18v40H3z" fill="#f4f4f4" /><path d="M28 1q0 18 14 18z" fill="#d2d2d2" /></svg>
      </DockSlot>
      <DockSlot>
        <div className="relative h-[50px] w-16"><div className="mt-[1px] h-[37px] bg-[#ebebeb] shadow" />
          <svg viewBox="0 0 20 20" className={badge}><rect width="20" height="20" rx="5" fill="#fff" />{chromeLogo(10, 10, 8.5)}</svg>
        </div>
      </DockSlot>
      <DockSlot>
        <div className="relative h-[50px] w-16">
          <div className="mt-[1px] flex h-[37px] flex-col bg-[#f0f0f0] shadow">
            <div className="mr-[10px] mt-[3px] h-3 bg-black pl-0.5 pt-1.5 font-['Liberation_Sans',sans-serif] text-[5px] font-bold leading-none text-white">Pressespiegel</div>
            <div className="mr-[10px] grid flex-1 grid-cols-4 gap-px bg-[#444]">
              <div className="bg-[#ccd]" /><div className="bg-[#eee]" /><div className="bg-[#dcd]" /><div className="bg-[#c8d0e0]" />
              <div className="bg-[#eee]" /><div className="bg-[#f4f4f4]" /><div className="bg-[#eee]" /><div className="bg-[#f4f4f4]" />
              <div className="bg-[#123c28]" /><div className="bg-[#1c7048]" /><div className="bg-[#0a2016]" /><div className="bg-[#246e50]" />
            </div>
          </div>
          <svg viewBox="0 0 20 20" className={badge}><rect width="20" height="20" rx="5" fill="#fff" />{chromeLogo(10, 10, 8.5)}</svg>
        </div>
      </DockSlot>
      <DockSlot>
        <div className="relative h-[47px] w-16">
          <div className="mt-[1px] flex h-[32px] justify-between bg-[#f0eeee] p-1 shadow">
            <div className="w-2 bg-[#d5d0d0]" /><div className="w-5 bg-[repeating-linear-gradient(#ccc_0_1px,#f4f4f4_1px_3px)]" /><div className="w-6 bg-[repeating-linear-gradient(#888_0_1px,#fff_1px_3px)]" />
          </div>
          <svg viewBox="0 0 54 54" className={badge}><rect width="54" height="54" rx="12" fill="#e4e8ee" /><Finder /></svg>
        </div>
      </DockSlot>
      <DockSlot>
        <div className="relative h-[56px] w-16">
          <div className="flex h-[51px] justify-center bg-white pt-1 shadow"><div className="h-10 w-7 bg-gradient-to-r from-[#9a978c] via-[#c3c3c8] to-[#a8a394]" /></div>
          <div className={badge + " flex items-center justify-center rounded-[5px] bg-[#55cf48] text-white"}><FaWhatsapp className="size-4" /></div>
        </div>
      </DockSlot>
      <DockSlot>
        <svg viewBox="0 0 48 64" className="h-16 w-12">
          <path d="M4 14l3-9 6 3 4-7 6 5 7-5 5 6 7 1 2 8z" fill="#e9e9e9" stroke="#555" strokeWidth="1.500" />
          <path d="M0 10q24 8 48 0l-7 50q-17 6-34 0z" fill="#dfdedc" opacity=".9" />
          <path d="M14 16l3 44M34 16l-3 44M24 17v45" stroke="#c9c7c5" strokeWidth="2" />
          <ellipse cx="24" cy="11" rx="23" ry="4" fill="none" stroke="#f5f5f5" strokeWidth="1.500" />
        </svg>
      </DockSlot>
    </div>
  );
}

/* ---------- desktop ---------- */

export default function App() {
  return (
    <div className="relative flex h-[2240px] w-[3584px] flex-col overflow-hidden bg-[#426eaf]">
      <Defs />
      <div className="absolute bottom-0 left-0 h-[180px] w-full bg-[linear-gradient(100deg,#5a3526_0,#5f3f2b_565px,#2c1117_566px,#2c1117_600px,#a96a66_601px,#ad6f62_1250px,#ba7049_2180px,#6d4024_2230px,#6d4024_2340px,#0f2226_2341px,#0b1a1f_2420px,#5c8a35_2421px,#5c8a35_2440px,#9a5a38_2441px,#9a5a38_2480px,#08171a_2481px,#08171a_2540px,#5c8a35_2541px,#5c8a35_2555px,#10191a_2556px,#10191a_2620px,#5c8a35_2621px,#5c8a35_2632px,#2c2516_2633px,#06090b_2720px,#7d4528_2721px,#7d4528_2765px,#431b0f_2766px,#431b0f_2870px,#cb6634_2871px,#cb6634_2995px,#3a180e_2996px,#431b0f_3360px,#cf8153_3361px,#cf8153_3450px,#5b4766_3451px,#5b4766_3480px,#431b0f_3481px)]" />
      <div className="absolute bottom-[50px] left-0 flex h-[110px] w-full items-end overflow-hidden rounded-bl-[20px] bg-[linear-gradient(90deg,#b8b8b8_0,#8f8f8f_55px,#7c7c7c_500px,#747474_3300px,#909090_3500px,#c9c9c9_3584px)]">
        <div className="ml-14 flex h-full w-[107px] items-end bg-[#16171c] pb-[46px] pl-[26px]">
          <div className="h-6 w-7 rounded-b-xl bg-[#55308c]" />
          <div className="h-6 w-7 rounded-b-xl bg-[#2d6a92]" />
        </div>
        <div className="mb-[46px] ml-[26px]">
          <Fit w={202} className="font-['Inter',sans-serif] text-[22px] font-bold leading-[32px] text-[#2e2e2e]">Collaborative Inn...</Fit>
        </div>
      </div>
      <MenuBar />
      <div className="relative flex h-[2081px] shrink-0 flex-col overflow-hidden rounded-[20px] shadow-[0_2px_4px_2px_rgba(0,0,0,.5)]">
        <TabStrip />
        <Toolbar />
        <div className="flex h-[1894px] shrink-0 bg-[#fafafa]">
          <Page />
          <div className="flex w-[30px] flex-col items-center border-l border-[#e6e6e6] pt-[181px]">
            <div className="h-[359px] w-4 rounded-full bg-[#c1c1c1]" />
          </div>
        </div>
        <div className="flex h-[29px] shrink-0 items-center border-t-2 border-[#d9d9d9] bg-[linear-gradient(90deg,#ececec_0,#e8e8e8_90%,#fafafa_100%)] pl-1.5">
          <div className="h-4 w-[2924px] rounded-full bg-[#b3b3b3]" />
        </div>
      </div>
      <div className="relative h-[109px] shrink-0 pt-[9px]">
        <Dock />
      </div>
    </div>
  );
}
